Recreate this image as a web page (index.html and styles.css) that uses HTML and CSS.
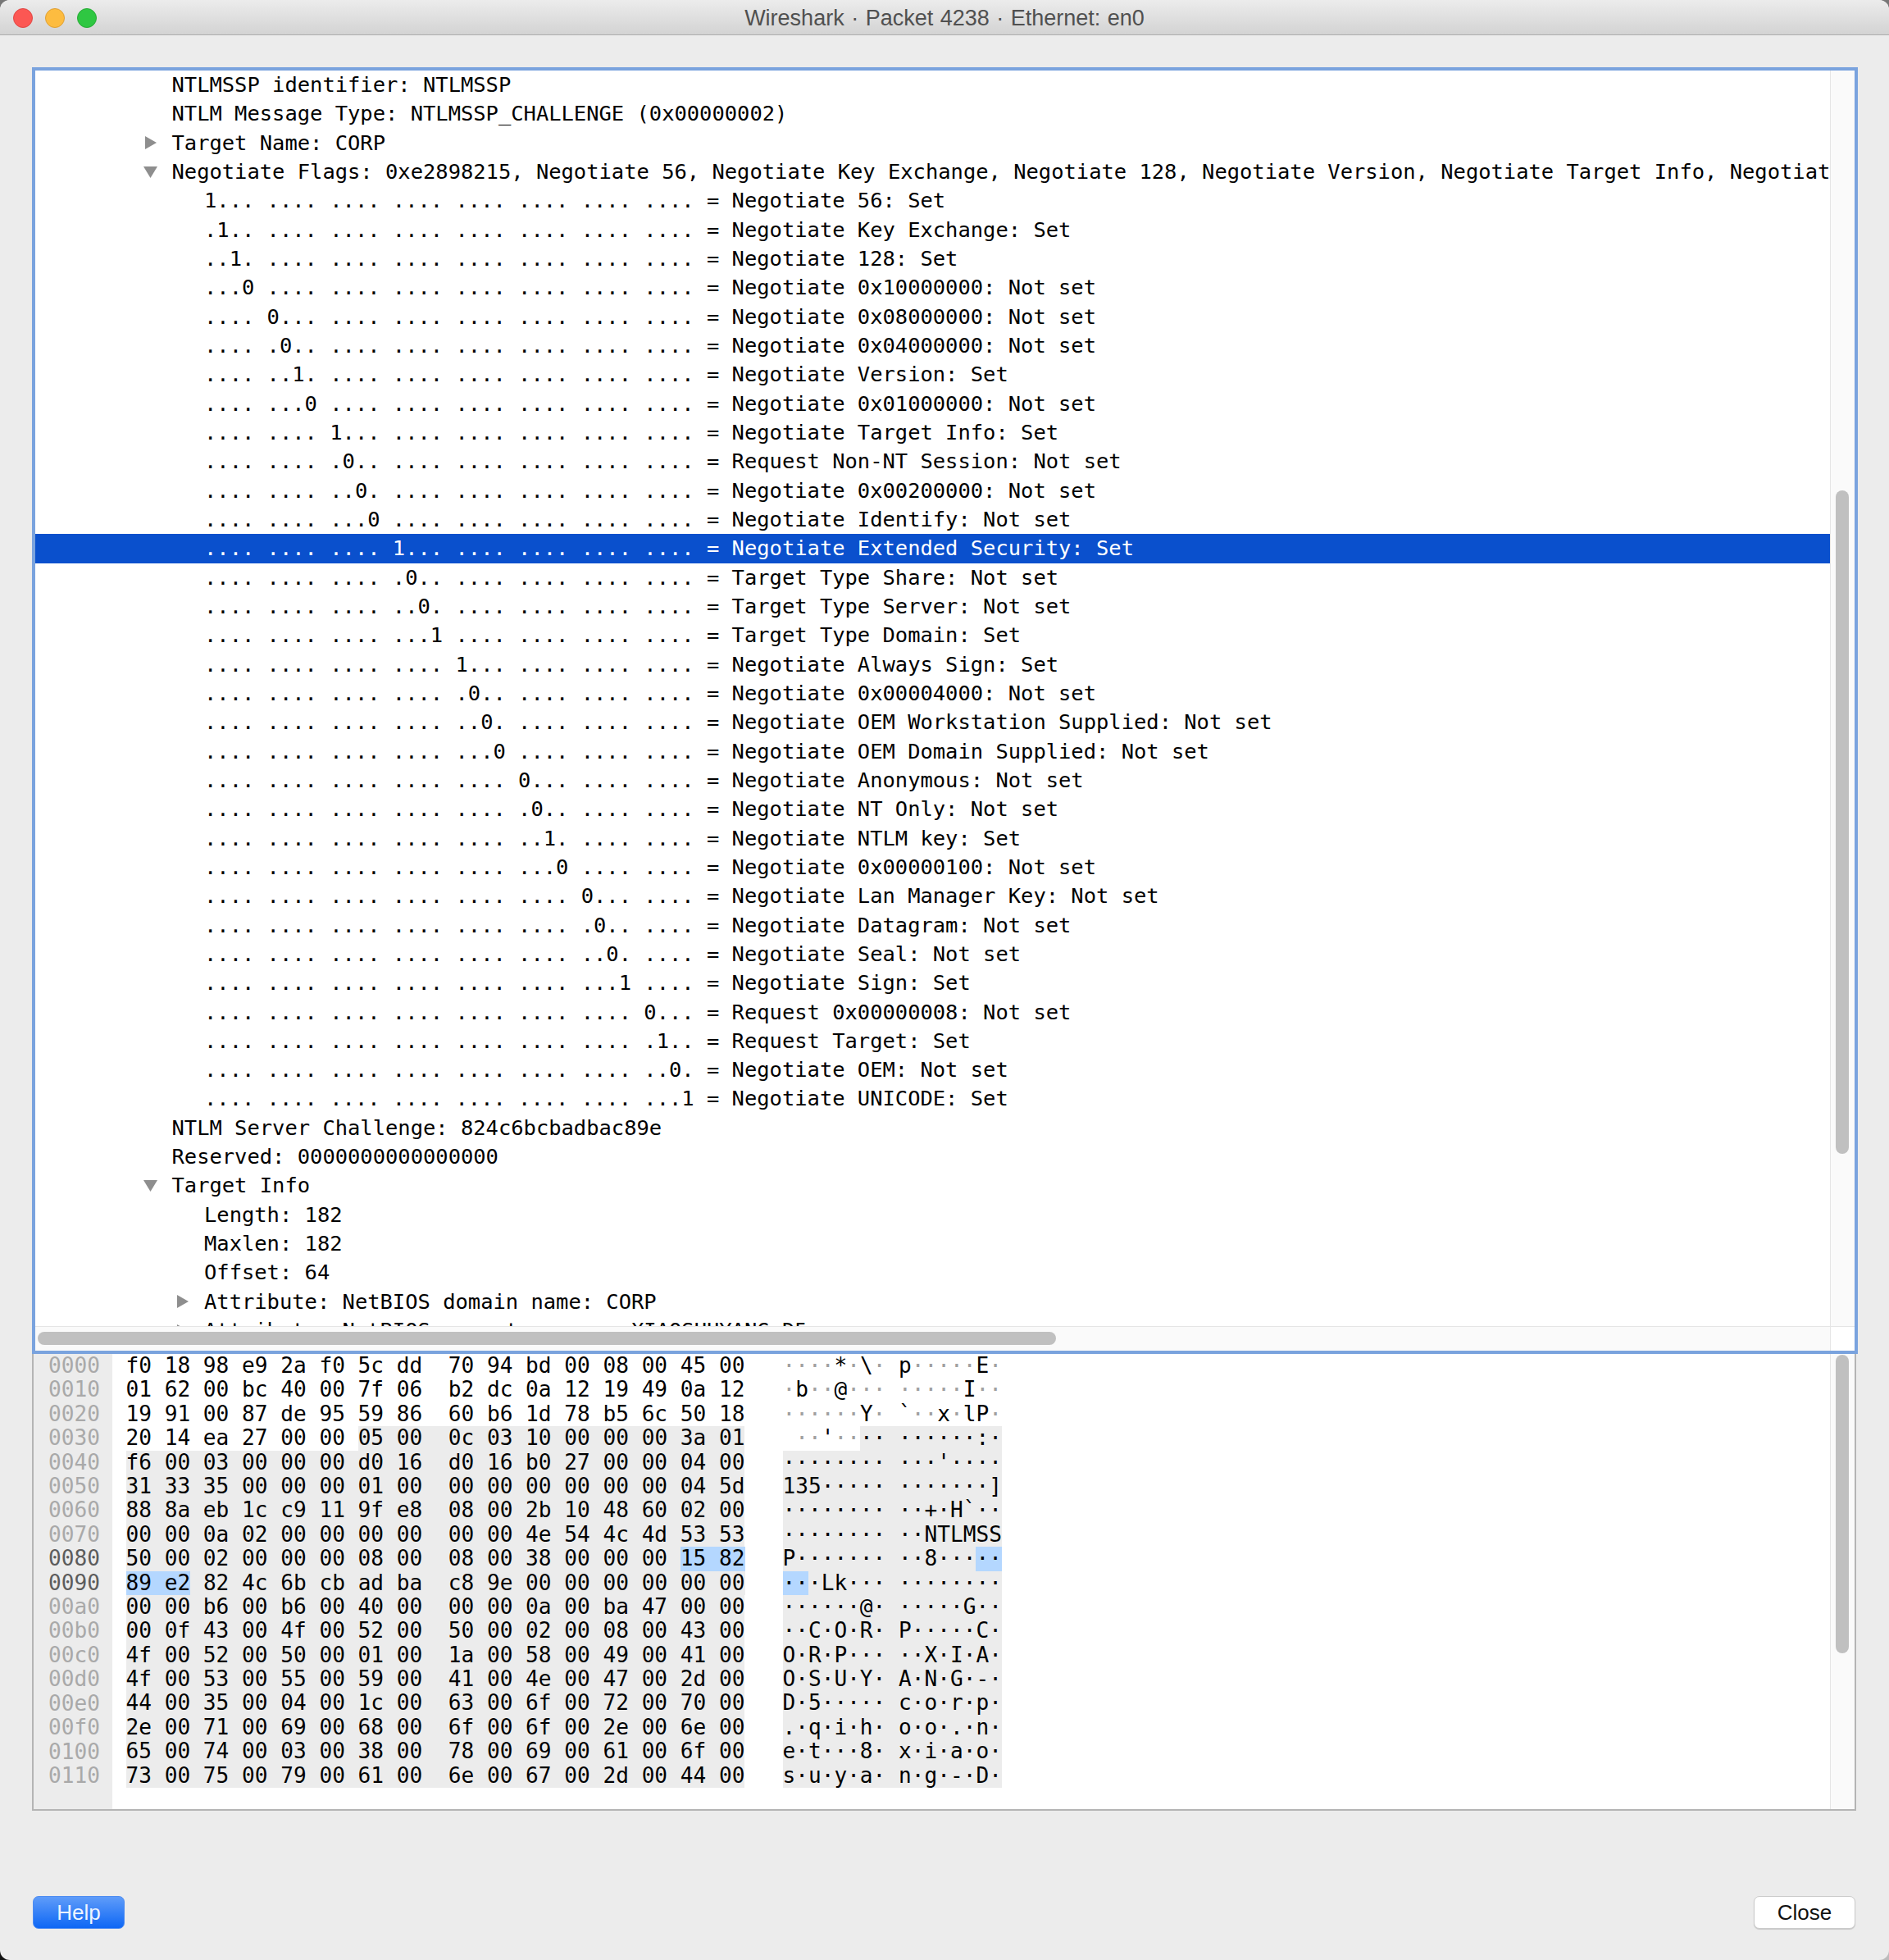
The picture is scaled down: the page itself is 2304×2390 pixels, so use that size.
FILE: index.html
```html
<!DOCTYPE html>
<html lang="en">
<head>
<meta charset="utf-8">
<title>Wireshark · Packet 4238 · Ethernet: en0</title>
<link rel="stylesheet" href="styles.css">
</head>
<body>
<div class="window">
  <header class="titlebar">
    <div class="lights"><span class="light red"></span><span class="light yellow"></span><span class="light green"></span></div>
    <div class="title">Wireshark · Packet 4238 · Ethernet: en0</div>
  </header>
  <main class="content">
    <section class="tree-pane">
      <div class="tree">
        <div class="row l1">NTLMSSP identifier: NTLMSSP</div>
        <div class="row l1">NTLM Message Type: NTLMSSP_CHALLENGE (0x00000002)</div>
        <div class="row t1"><svg class="tw" viewBox="0 0 33 18"><path d="M2 1l14 8-14 8z"/></svg>Target Name: CORP</div>
        <div class="row t1"><svg class="tw" viewBox="0 0 33 18"><path d="M0 2h17l-8.500 14z"/></svg>Negotiate Flags: 0xe2898215, Negotiate 56, Negotiate Key Exchange, Negotiate 128, Negotiate Version, Negotiate Target Info, Negotiate Extended Security, Target Type Domain, Negotiate NTLM key</div>
        <div class="row l2">1... .... .... .... .... .... .... .... = Negotiate 56: Set</div>
        <div class="row l2">.1.. .... .... .... .... .... .... .... = Negotiate Key Exchange: Set</div>
        <div class="row l2">..1. .... .... .... .... .... .... .... = Negotiate 128: Set</div>
        <div class="row l2">...0 .... .... .... .... .... .... .... = Negotiate 0x10000000: Not set</div>
        <div class="row l2">.... 0... .... .... .... .... .... .... = Negotiate 0x08000000: Not set</div>
        <div class="row l2">.... .0.. .... .... .... .... .... .... = Negotiate 0x04000000: Not set</div>
        <div class="row l2">.... ..1. .... .... .... .... .... .... = Negotiate Version: Set</div>
        <div class="row l2">.... ...0 .... .... .... .... .... .... = Negotiate 0x01000000: Not set</div>
        <div class="row l2">.... .... 1... .... .... .... .... .... = Negotiate Target Info: Set</div>
        <div class="row l2">.... .... .0.. .... .... .... .... .... = Request Non-NT Session: Not set</div>
        <div class="row l2">.... .... ..0. .... .... .... .... .... = Negotiate 0x00200000: Not set</div>
        <div class="row l2">.... .... ...0 .... .... .... .... .... = Negotiate Identify: Not set</div>
        <div class="row l2 selected">.... .... .... 1... .... .... .... .... = Negotiate Extended Security: Set</div>
        <div class="row l2">.... .... .... .0.. .... .... .... .... = Target Type Share: Not set</div>
        <div class="row l2">.... .... .... ..0. .... .... .... .... = Target Type Server: Not set</div>
        <div class="row l2">.... .... .... ...1 .... .... .... .... = Target Type Domain: Set</div>
        <div class="row l2">.... .... .... .... 1... .... .... .... = Negotiate Always Sign: Set</div>
        <div class="row l2">.... .... .... .... .0.. .... .... .... = Negotiate 0x00004000: Not set</div>
        <div class="row l2">.... .... .... .... ..0. .... .... .... = Negotiate OEM Workstation Supplied: Not set</div>
        <div class="row l2">.... .... .... .... ...0 .... .... .... = Negotiate OEM Domain Supplied: Not set</div>
        <div class="row l2">.... .... .... .... .... 0... .... .... = Negotiate Anonymous: Not set</div>
        <div class="row l2">.... .... .... .... .... .0.. .... .... = Negotiate NT Only: Not set</div>
        <div class="row l2">.... .... .... .... .... ..1. .... .... = Negotiate NTLM key: Set</div>
        <div class="row l2">.... .... .... .... .... ...0 .... .... = Negotiate 0x00000100: Not set</div>
        <div class="row l2">.... .... .... .... .... .... 0... .... = Negotiate Lan Manager Key: Not set</div>
        <div class="row l2">.... .... .... .... .... .... .0.. .... = Negotiate Datagram: Not set</div>
        <div class="row l2">.... .... .... .... .... .... ..0. .... = Negotiate Seal: Not set</div>
        <div class="row l2">.... .... .... .... .... .... ...1 .... = Negotiate Sign: Set</div>
        <div class="row l2">.... .... .... .... .... .... .... 0... = Request 0x00000008: Not set</div>
        <div class="row l2">.... .... .... .... .... .... .... .1.. = Request Target: Set</div>
        <div class="row l2">.... .... .... .... .... .... .... ..0. = Negotiate OEM: Not set</div>
        <div class="row l2">.... .... .... .... .... .... .... ...1 = Negotiate UNICODE: Set</div>
        <div class="row l1">NTLM Server Challenge: 824c6bcbadbac89e</div>
        <div class="row l1">Reserved: 0000000000000000</div>
        <div class="row t1"><svg class="tw" viewBox="0 0 33 18"><path d="M0 2h17l-8.500 14z"/></svg>Target Info</div>
        <div class="row l2">Length: 182</div>
        <div class="row l2">Maxlen: 182</div>
        <div class="row l2">Offset: 64</div>
        <div class="row t2"><svg class="tw" viewBox="0 0 33 18"><path d="M2 1l14 8-14 8z"/></svg>Attribute: NetBIOS domain name: CORP</div>
        <div class="row t2"><svg class="tw" viewBox="0 0 33 18"><path d="M2 1l14 8-14 8z"/></svg>Attribute: NetBIOS computer name: XIAOSHUYANG-D5</div>
      </div>
      <div class="vscroll"><div class="thumb-v tree-thumb"></div></div>
      <div class="hscroll"><div class="thumb-h"></div></div>
      <div class="corner"></div>
    </section>

    <section class="hex-pane">
      <div class="offsets">
        <div>0000</div><div>0010</div><div>0020</div><div>0030</div>
        <div>0040</div><div>0050</div><div>0060</div><div>0070</div>
        <div class="on">0080</div><div class="on">0090</div>
        <div>00a0</div><div>00b0</div><div>00c0</div><div>00d0</div>
        <div>00e0</div><div>00f0</div><div>0100</div><div>0110</div>
      </div>
      <div class="dump">
        <div class="line"><div class="hex">f0 18 98 e9 2a f0 5c dd  70 94 bd 00 08 00 45 00</div><div class="asc"><i>····</i>*<i>·</i>\<i>·</i> p<i>·····</i>E<i>·</i></div></div>
        <div class="line"><div class="hex">01 62 00 bc 40 00 7f 06  b2 dc 0a 12 19 49 0a 12</div><div class="asc"><i>·</i>b<i>··</i>@<i>···</i> <i>·····</i>I<i>··</i></div></div>
        <div class="line"><div class="hex">19 91 00 87 de 95 59 86  60 b6 1d 78 b5 6c 50 18</div><div class="asc"><i>······</i>Y<i>·</i> `<i>··</i>x<i>·</i>lP<i>·</i></div></div>
        <div class="line"><div class="hex">20 14 ea 27 00 00 <b>05 00  0c 03 10 00 00 00 3a 01</b></div><div class="asc"> <i>··</i>'<i>··</i><b>·· ······:·</b></div></div>
        <div class="line"><div class="hex"><b>f6 00 03 00 00 00 d0 16  d0 16 b0 27 00 00 04 00</b></div><div class="asc"><b>········ ···'····</b></div></div>
        <div class="line"><div class="hex"><b>31 33 35 00 00 00 01 00  00 00 00 00 00 00 04 5d</b></div><div class="asc"><b>135····· ·······]</b></div></div>
        <div class="line"><div class="hex"><b>88 8a eb 1c c9 11 9f e8  08 00 2b 10 48 60 02 00</b></div><div class="asc"><b>········ ··+·H`··</b></div></div>
        <div class="line"><div class="hex"><b>00 00 0a 02 00 00 00 00  00 00 4e 54 4c 4d 53 53</b></div><div class="asc"><b>········ ··NTLMSS</b></div></div>
        <div class="line"><div class="hex"><b>50 00 02 00 00 00 08 00  08 00 38 00 00 00 </b><u>15 82</u></div><div class="asc"><b>P······· ··8···</b><u>··</u></div></div>
        <div class="line"><div class="hex"><u>89 e2</u><b> 82 4c 6b cb ad ba  c8 9e 00 00 00 00 00 00</b></div><div class="asc"><u>··</u><b>·Lk··· ········</b></div></div>
        <div class="line"><div class="hex"><b>00 00 b6 00 b6 00 40 00  00 00 0a 00 ba 47 00 00</b></div><div class="asc"><b>······@· ·····G··</b></div></div>
        <div class="line"><div class="hex"><b>00 0f 43 00 4f 00 52 00  50 00 02 00 08 00 43 00</b></div><div class="asc"><b>··C·O·R· P·····C·</b></div></div>
        <div class="line"><div class="hex"><b>4f 00 52 00 50 00 01 00  1a 00 58 00 49 00 41 00</b></div><div class="asc"><b>O·R·P··· ··X·I·A·</b></div></div>
        <div class="line"><div class="hex"><b>4f 00 53 00 55 00 59 00  41 00 4e 00 47 00 2d 00</b></div><div class="asc"><b>O·S·U·Y· A·N·G·-·</b></div></div>
        <div class="line"><div class="hex"><b>44 00 35 00 04 00 1c 00  63 00 6f 00 72 00 70 00</b></div><div class="asc"><b>D·5····· c·o·r·p·</b></div></div>
        <div class="line"><div class="hex"><b>2e 00 71 00 69 00 68 00  6f 00 6f 00 2e 00 6e 00</b></div><div class="asc"><b>.·q·i·h· o·o·.·n·</b></div></div>
        <div class="line"><div class="hex"><b>65 00 74 00 03 00 38 00  78 00 69 00 61 00 6f 00</b></div><div class="asc"><b>e·t···8· x·i·a·o·</b></div></div>
        <div class="line"><div class="hex"><b>73 00 75 00 79 00 61 00  6e 00 67 00 2d 00 44 00</b></div><div class="asc"><b>s·u·y·a· n·g·-·D·</b></div></div>
      </div>
      <div class="vscroll"><div class="thumb-v hex-thumb"></div></div>
    </section>

    <footer class="actions">
      <button class="btn primary">Help</button>
      <button class="btn plain">Close</button>
    </footer>
  </main>
</div>
</body>
</html>
```
FILE: styles.css
```css
* { box-sizing: border-box; }
html, body { margin: 0; height: 2390px; }
body {
  width: 2304px;
  overflow: hidden;
  background:
    linear-gradient(#111, #111) left bottom / 50% 50% no-repeat,
    linear-gradient(#bbb, #bbb) right bottom / 50% 50% no-repeat,
    #777;
}
.window {
  width: 2304px;
  height: 2390px;
  background: #ececec;
  border-radius: 12px;
  overflow: hidden;
  display: flex;
  flex-direction: column;
}
.titlebar {
  height: 43px;
  flex: none;
  display: flex;
  align-items: center;
  position: relative;
  background: linear-gradient(#ececec, #d3d3d3);
  border-bottom: 1px solid #acacac;
}
.lights { display: flex; gap: 15px; padding-left: 15.500px; position: absolute; top: 9.500px; }
.light { width: 24px; height: 24px; border-radius: 50%; border: 1px solid; }
.red { background: #fc5753; border-color: #df4744; }
.yellow { background: #fdbc40; border-color: #de9f34; }
.green { background: #2fc742; border-color: #27aa35; }
.title {
  flex: 1;
  text-align: center;
  font: 27px "Liberation Sans", sans-serif;
  word-spacing: 1px;
  color: #505050;
  white-space: pre;
  padding-top: 3px;
}
.content { padding: 39px 0 0 39px; flex: 1; display: flex; flex-direction: column; }
.tree-pane {
  width: 2227px;
  height: 1569px;
  flex: none;
  border: 4px solid #7aa3de;
  background: #fff;
  display: grid;
  grid-template-columns: 2189px 30px;
  grid-template-rows: 1531px 30px;
}
.tree {
  overflow: hidden;
  font: 25.460px/35.330px "DejaVu Sans Mono", monospace;
  color: #000;
}
.row { height: 35.330px; white-space: pre; display: flex; align-items: center; }
.l1 { padding-left: 166.500px; }
.l2 { padding-left: 206px; }
.t1 { padding-left: 133.500px; }
.t2 { padding-left: 173px; }
.tw { width: 33px; height: 18px; flex: none; fill: #8e8e8e; margin-left: -2px; margin-right: 2px; }
.selected { background: #0a50cd; color: #fff; }
.vscroll { background: #fafafa; border-left: 1px solid #e5e5e5; padding: 0 6px; }
.thumb-v { width: 16px; background: #c0c0c0; border-radius: 8px; }
.tree-thumb { margin-top: 512px; height: 809px; }
.hex-thumb { margin-top: 1px; height: 364px; }
.hscroll { background: #fafafa; border-top: 1px solid #e5e5e5; padding: 6px 0 0 2.500px; }
.thumb-h { width: 1242px; height: 16px; background: #c0c0c0; border-radius: 8px; }
.corner { background: #fff; border-left: 1px solid #e5e5e5; border-top: 1px solid #e5e5e5; }
.hex-pane {
  width: 2225px;
  height: 557px;
  flex: none;
  border: solid #b4b4b4;
  border-width: 0 2.500px 2px 2px;
  background: #fff;
  display: grid;
  grid-template-columns: 96px 2095px 1fr;
  font: 26.130px/29.400px "DejaVu Sans Mono", monospace;
  color: #000;
}
.offsets { background: #ececec; color: #a9a9a9; padding-left: 18px; }
.offsets .on { color: #5c5c5c; }
.line { display: flex; height: 29.400px; white-space: pre; padding-left: 16.500px; }
.hex { width: 755px; flex: none; }
.asc { margin-left: 46px; width: 268px; flex: none; }
.dump b, .dump u { display: inline-block; font-weight: 400; text-decoration: none; }
.dump b { background: #ececec; }
.dump u { background: #b4d7ff; }
.dump i { font-style: normal; color: #a0a0a0; }
.actions {
  margin-top: 104px;
  padding: 0 41px 0 1px;
  display: flex;
  justify-content: space-between;
}
.btn {
  height: 40px;
  padding: 0;
  border-radius: 7px;
  font: 26px/38px "Liberation Sans", sans-serif;
}
.primary {
  width: 112px;
  color: #eef5ff;
  border: 1px solid #4d8cf2;
  background: linear-gradient(#5f9cf9, #0e67f5);
}
.plain {
  width: 124px;
  color: #111;
  border: 1px solid #cbcbcb;
  background: #fff;
  box-shadow: 0 1px 1px #c8c8c8;
}
```
